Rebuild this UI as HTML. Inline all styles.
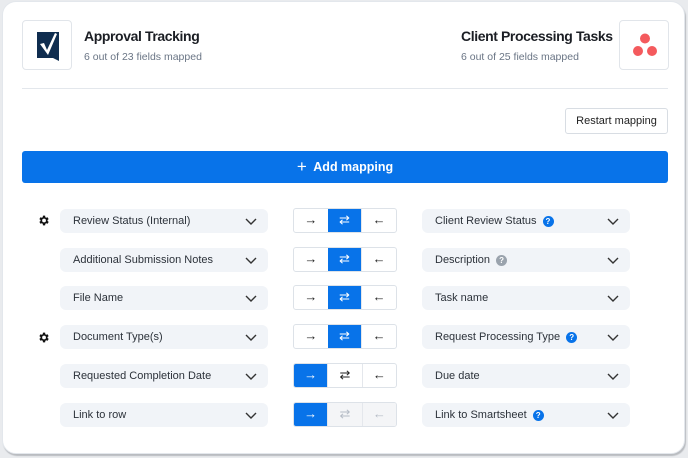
<!DOCTYPE html>
<html><head><style>
*{box-sizing:border-box;margin:0;padding:0}
body{width:688px;height:458px;background:#e9ebee;font-family:"Liberation Sans",sans-serif;position:relative;overflow:hidden}
.card{position:absolute;left:2px;top:1px;width:683px;height:453px;background:#fff;border:1px solid #e3e7ec;border-radius:14px;box-shadow:1px 2px 1px #b9bcc0}
.abs{position:absolute}
.logo{width:50px;height:50px;border:1px solid #e1e5ea;border-radius:4px;background:#fff}
.t{font-size:14px;font-weight:bold;color:#1b1e24;letter-spacing:-0.4px}
.s{font-size:10.5px;color:#6a7585}
.sel{position:absolute;width:208px;height:24px;background:#f1f4f8;border-radius:6px;font-size:11px;color:#2c323a;padding:0 0 0 13px;line-height:24px}
.sel svg{position:absolute;right:11px;top:9px}
.tg{position:absolute;left:293px;width:104px;height:25px;border:1px solid #dde2e8;border-radius:3px;display:flex;overflow:hidden;background:#fff}
.tg div{flex:1;display:flex;align-items:center;justify-content:center;font-size:13px;color:#222;line-height:1;padding-bottom:2px}
.tg div+div{border-left:1px solid #e4e7ec}
.tg .on{background:#0873e9;color:#fff;border-left:none}
.tg .dis{background:#f4f5f7;color:#b5bcc6}
.q{display:inline-block;width:11px;height:11px;border-radius:50%;background:#0873e9;color:#fff;font-size:8px;font-weight:bold;text-align:center;line-height:11px;margin-left:6px;vertical-align:0}
.q.g{background:#9aa3ad}
.gear{position:absolute;left:37px}
</style></head><body>
<div class="card"></div>
<div class="abs logo" style="left:22px;top:20px"><svg width="50" height="50" viewBox="0 0 50 50"><path d="M14 11h22v29l-6-3h-16z" fill="#0f2d4f"/><path d="M17 23l4-1 3 7 8-17 2 1-9 21z" fill="#fff"/></svg></div>
<div class="abs t" style="left:84px;top:28px">Approval Tracking</div>
<div class="abs s" style="left:84px;top:51px">6 out of 23 fields mapped</div>
<div class="abs t" style="left:461px;top:28px">Client Processing Tasks</div>
<div class="abs s" style="left:461px;top:51px">6 out of 25 fields mapped</div>
<div class="abs logo" style="left:619px;top:20px"><svg width="50" height="50" viewBox="0 0 50 50"><circle cx="25" cy="17.5" r="5" fill="#f45a5d"/><circle cx="18" cy="30" r="5" fill="#f45a5d"/><circle cx="32" cy="30" r="5" fill="#f45a5d"/></svg></div>
<div class="abs" style="left:22px;top:88px;width:646px;height:1px;background:#e3e7ec"></div>
<div class="abs" style="left:565px;top:108px;width:103px;height:26px;border:1px solid #d8dde3;border-radius:3px;font-size:11px;color:#222;text-align:center;line-height:24px">Restart mapping</div>
<div class="abs" style="left:22px;top:151px;width:646px;height:32px;background:#0873e9;border-radius:3px;color:#fff;font-size:12.5px;font-weight:bold;text-align:center;line-height:32px"><span style="font-weight:normal;font-size:17px;vertical-align:-1px">+</span>&nbsp; Add mapping</div>

<svg class="gear" style="top:214px" width="13" height="13" viewBox="0 0 24 24"><path fill="#111" d="M19.4 13a7.5 7.5 0 000-2l2.1-1.6-2-3.5-2.5 1a7.6 7.6 0 00-1.7-1L15 3h-4l-.4 2.9a7.6 7.6 0 00-1.7 1l-2.5-1-2 3.5L6.5 11a7.5 7.5 0 000 2l-2.1 1.6 2 3.5 2.5-1a7.6 7.6 0 001.7 1L11 21h4l.4-2.9a7.6 7.6 0 001.7-1l2.5 1 2-3.5zM13 15.5a3.5 3.5 0 110-7 3.5 3.5 0 010 7z"/></svg>
<div class="sel" style="left:60px;top:209px">Review Status (Internal)<svg width="12" height="8"><path d="M1 1l5 5 5-5" fill="none" stroke="#333" stroke-width="1.4"/></svg></div>
<div class="tg" style="top:208px"><div>&rarr;</div><div class="on">&#8644;</div><div>&larr;</div></div>
<div class="sel" style="left:422px;top:209px">Client Review Status<span class="q">?</span><svg width="12" height="8"><path d="M1 1l5 5 5-5" fill="none" stroke="#333" stroke-width="1.4"/></svg></div>

<div class="sel" style="left:60px;top:248px">Additional Submission Notes<svg width="12" height="8"><path d="M1 1l5 5 5-5" fill="none" stroke="#333" stroke-width="1.4"/></svg></div>
<div class="tg" style="top:247px"><div>&rarr;</div><div class="on">&#8644;</div><div>&larr;</div></div>
<div class="sel" style="left:422px;top:248px">Description<span class="q g">?</span><svg width="12" height="8"><path d="M1 1l5 5 5-5" fill="none" stroke="#333" stroke-width="1.4"/></svg></div>

<div class="sel" style="left:60px;top:286px">File Name<svg width="12" height="8"><path d="M1 1l5 5 5-5" fill="none" stroke="#333" stroke-width="1.4"/></svg></div>
<div class="tg" style="top:285px"><div>&rarr;</div><div class="on">&#8644;</div><div>&larr;</div></div>
<div class="sel" style="left:422px;top:286px">Task name<svg width="12" height="8"><path d="M1 1l5 5 5-5" fill="none" stroke="#333" stroke-width="1.4"/></svg></div>

<svg class="gear" style="top:331px" width="13" height="13" viewBox="0 0 24 24"><path fill="#111" d="M19.4 13a7.5 7.5 0 000-2l2.1-1.6-2-3.5-2.5 1a7.6 7.6 0 00-1.7-1L15 3h-4l-.4 2.9a7.6 7.6 0 00-1.7 1l-2.5-1-2 3.5L6.5 11a7.5 7.5 0 000 2l-2.1 1.6 2 3.5 2.5-1a7.6 7.6 0 001.7 1L11 21h4l.4-2.9a7.6 7.6 0 001.7-1l2.5 1 2-3.5zM13 15.5a3.5 3.5 0 110-7 3.5 3.5 0 010 7z"/></svg>
<div class="sel" style="left:60px;top:325px">Document Type(s)<svg width="12" height="8"><path d="M1 1l5 5 5-5" fill="none" stroke="#333" stroke-width="1.4"/></svg></div>
<div class="tg" style="top:324px"><div>&rarr;</div><div class="on">&#8644;</div><div>&larr;</div></div>
<div class="sel" style="left:422px;top:325px">Request Processing Type<span class="q">?</span><svg width="12" height="8"><path d="M1 1l5 5 5-5" fill="none" stroke="#333" stroke-width="1.4"/></svg></div>

<div class="sel" style="left:60px;top:364px">Requested Completion Date<svg width="12" height="8"><path d="M1 1l5 5 5-5" fill="none" stroke="#333" stroke-width="1.4"/></svg></div>
<div class="tg" style="top:363px"><div class="on">&rarr;</div><div>&#8644;</div><div>&larr;</div></div>
<div class="sel" style="left:422px;top:364px">Due date<svg width="12" height="8"><path d="M1 1l5 5 5-5" fill="none" stroke="#333" stroke-width="1.4"/></svg></div>

<div class="sel" style="left:60px;top:403px">Link to row<svg width="12" height="8"><path d="M1 1l5 5 5-5" fill="none" stroke="#333" stroke-width="1.4"/></svg></div>
<div class="tg" style="top:402px"><div class="on">&rarr;</div><div class="dis">&#8644;</div><div class="dis">&larr;</div></div>
<div class="sel" style="left:422px;top:403px">Link to Smartsheet<span class="q">?</span><svg width="12" height="8"><path d="M1 1l5 5 5-5" fill="none" stroke="#333" stroke-width="1.4"/></svg></div>
</body></html>
